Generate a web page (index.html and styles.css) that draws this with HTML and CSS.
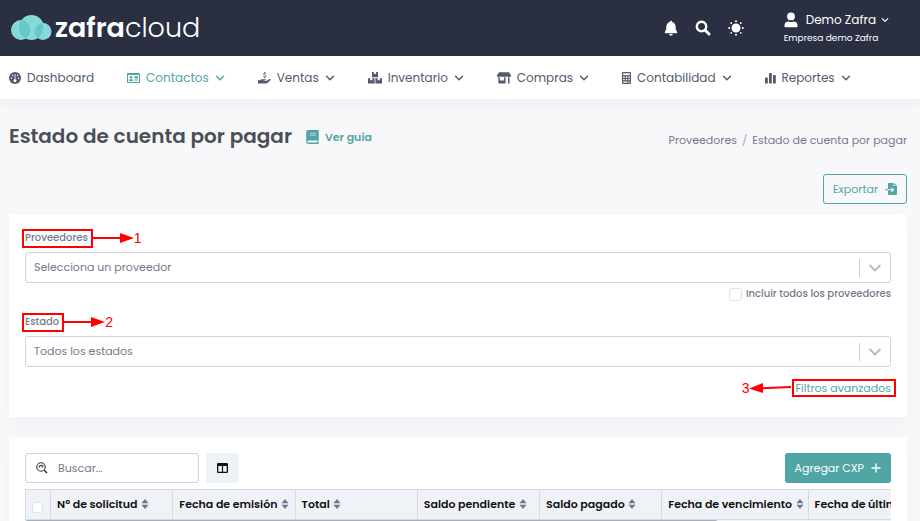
FILE: index.html
```html
<!DOCTYPE html>
<html lang="es">
<head>
  <meta charset="UTF-8" />
  <meta name="viewport" content="width=device-width, initial-scale=1" />
  <title>Estado de cuenta por pagar</title>
  <link rel="stylesheet" href="styles.css">
</head>

<body>
  <!-- Iconos reutilizados -->
  <svg class="sprite" width="0" height="0" aria-hidden="true">
    <symbol id="chevron" viewBox="0 0 10 10">
      <path d="M1.5 3.2 L5 6.8 L8.5 3.2" fill="none" stroke="currentColor" stroke-width="1.4" stroke-linecap="round" stroke-linejoin="round" />
    </symbol>
    <symbol id="sort" viewBox="0 0 8 10">
      <path d="M4 0 L7.6 4.2 H.4Z M4 10 L.4 5.8 H7.6Z" fill="currentColor" />
    </symbol>
  </svg>

  <header class="topbar">
    <a class="logo" href="#">
      <svg width="41" height="26" viewBox="0 0 41 26" aria-hidden="true">
        <circle cx="20.500" cy="12.500" r="12.500" fill="#86d9d8" />
        <circle cx="10" cy="15" r="10" fill="#86d9d8" />
        <circle cx="32" cy="16.500" r="8.500" fill="#86d9d8" />
        <path d="M10.500 5A10 10 0 0 1 14.500 23.400A12.500 12.500 0 0 1 10.500 5Z" fill="#65c9cb" />
        <path d="M31 8.200A12.500 12.500 0 0 1 27 23.300A8.500 8.500 0 0 1 31 8.200Z" fill="#65c9cb" />
      </svg>
      <span class="logo-text"><b>zafra</b>cloud</span>
    </a>

    <div class="topbar-actions">
      <button type="button" class="icon-btn" aria-label="Notificaciones">
        <svg width="14" height="16" viewBox="0 0 14 16"><path d="M7 .8c.7 0 1.100.5 1.100 1.100 2.200.5 3.500 2.300 3.500 4.600 0 3 .6 4.200 1.500 5.200.5.600.1 1.500-.7 1.500H1.600c-.8 0-1.200-.9-.7-1.500C1.800 10.700 2.400 9.500 2.400 6.500c0-2.300 1.300-4.100 3.500-4.600C5.900 1.300 6.300.8 7 .8ZM5.300 13.900h3.400c0 1-.8 1.600-1.700 1.600s-1.700-.6-1.700-1.600Z" fill="#fff" /></svg>
      </button>
      <button type="button" class="icon-btn" aria-label="Buscar">
        <svg width="16" height="16" viewBox="0 0 16 16" fill="none" stroke="#fff"><circle cx="6.500" cy="6.500" r="4.700" stroke-width="2.400" /><path d="M10 10 L14 14" stroke-width="2.900" stroke-linecap="round" /></svg>
      </button>
      <button type="button" class="icon-btn" aria-label="Tema">
        <svg width="16" height="16" viewBox="0 0 16 16"><circle cx="8" cy="8" r="4.500" fill="#fff" /><g fill="#fff"><circle cx="8" cy="1.200" r="1" /><circle cx="8" cy="14.800" r="1" /><circle cx="1.200" cy="8" r="1" /><circle cx="14.800" cy="8" r="1" /><circle cx="3.200" cy="3.200" r=".9" /><circle cx="12.800" cy="3.200" r=".9" /><circle cx="3.200" cy="12.800" r=".9" /><circle cx="12.800" cy="12.800" r=".9" /></g></svg>
      </button>
      <button type="button" class="user">
        <span class="user-name">
          <svg width="14" height="16" viewBox="0 0 14 16"><circle cx="7" cy="4.400" r="3.900" fill="#fff" /><path d="M.5 14.500v-1c0-2.600 1.700-4 4-4 .8.400 1.600.6 2.500.6s1.700-.2 2.500-.6c2.300 0 4 1.400 4 4v1c0 .5-.3.800-.8.800H1.300c-.5 0-.8-.3-.8-.8Z" fill="#fff" /></svg>
          Demo Zafra
          <svg class="caret" width="8" height="8"><use href="#chevron" /></svg>
        </span>
        <span class="user-company">Empresa demo Zafra</span>
      </button>
    </div>
  </header>

  <nav class="menu">
    <a href="#">
      <svg width="12" height="12" viewBox="0 0 12 12"><circle cx="6" cy="6" r="6" fill="currentColor" /><g fill="#fff"><circle cx="2.300" cy="6.200" r=".7" /><circle cx="3.500" cy="3.500" r=".7" /><circle cx="8.500" cy="3.500" r=".7" /><circle cx="9.700" cy="6.200" r=".7" /><path d="M5.600 2h.8v5.300a1.400 1.400 0 1 1-.8 0Z" /></g></svg>
      <span>Dashboard</span>
    </a>
    <a href="#" class="active">
      <svg width="13" height="12" viewBox="0 0 13 12"><path d="M1 1h11q1 0 1 1v8q0 1-1 1H1q-1 0-1-1V2q0-1 1-1Z" fill="currentColor" /><path d="M1 3h11v6.900H1Z" fill="#fff" /><g fill="currentColor"><circle cx="4" cy="5.200" r="1.300" /><path d="M1.900 9c0-1.400.8-2.100 2.100-2.100S6.100 7.600 6.100 9ZM7.500 4.200h3.600v2.400H7.500ZM7.500 7.500h3.600v1H7.500Z" /></g></svg>
      <span>Contactos</span>
      <svg class="caret" width="10" height="10"><use href="#chevron" /></svg>
    </a>
    <a href="#">
      <svg width="13" height="12" viewBox="0 0 13 12"><path d="M0 8.300h1.800c.9-.8 1.700-1 2.700-1h2.900c.9 0 .9 1.300 0 1.300H5.600v.4h2.900l2.900-1.900c1-.6 1.800.5 1 1.200L9.300 11q-.6.500-1.400.5H0Z" fill="currentColor" /><path d="M8 1.500C7.200.9 5.500 1 5.500 2.100S8 3.100 8 4.200 6.200 5.500 5.300 4.700M6.700 0v1.200M6.700 5v1.200" fill="none" stroke="currentColor" stroke-width=".9" /></svg>
      <span>Ventas</span>
      <svg class="caret" width="10" height="10"><use href="#chevron" /></svg>
    </a>
    <a href="#">
      <svg width="14" height="12" viewBox="0 0 14 12" fill="currentColor"><path d="M4 0h1.900v2.200l1.100-.5 1.100.5V0H10v5.300H4ZM0 6.200h2.200v2.300l1.100-.5 1.100.5V6.200h2.200v5.400H0ZM7.400 6.200h2.200v2.300l1.100-.5 1.100.5V6.200H14v5.400H7.400Z" /></svg>
      <span>Inventario</span>
      <svg class="caret" width="10" height="10"><use href="#chevron" /></svg>
    </a>
    <a href="#">
      <svg width="14" height="12" viewBox="0 0 14 12" fill="currentColor"><path d="M2 .3h10L14 3.600v1.200H0V3.600ZM1.300 5.300h1.500v3.300h4.300V5.300h1.500v6.300H2.300q-1 0-1-1ZM11 5.300h1.500v6.300H11Z" /></svg>
      <span>Compras</span>
      <svg class="caret" width="10" height="10"><use href="#chevron" /></svg>
    </a>
    <a href="#">
      <svg width="9" height="12" viewBox="0 0 9 12"><rect width="9" height="12" rx="1" fill="currentColor" /><path d="M1.200 1.200h6.600v2H1.200ZM1.200 4.500h1.500V6H1.200ZM3.800 4.500h1.500V6H3.800ZM6.400 4.500h1.400V6H6.400ZM1.200 7h1.500v1.300H1.200ZM3.800 7h1.500v1.300H3.800ZM6.400 7h1.400v1.300H6.400ZM1.200 9.400h4.100v1.300H1.200ZM6.400 9.400h1.400v1.300H6.400Z" fill="#fff" /></svg>
      <span>Contabilidad</span>
      <svg class="caret" width="10" height="10"><use href="#chevron" /></svg>
    </a>
    <a href="#">
      <svg width="11" height="12" viewBox="0 0 11 12" fill="currentColor"><rect y="5.500" width="2.800" height="6" rx=".6" /><rect x="4" y="1" width="2.800" height="10.500" rx=".6" /><rect x="8" y="3" width="2.800" height="8.500" rx=".6" /></svg>
      <span>Reportes</span>
      <svg class="caret" width="10" height="10"><use href="#chevron" /></svg>
    </a>
  </nav>

  <main>
    <div class="page-head">
      <h1>Estado de cuenta por pagar</h1>
      <a href="#" class="guide">
        <svg width="13" height="14" viewBox="0 0 13 14"><path d="M2.500 0H12q.8 0 .8.800V9.500q0 .5-.5.800v2.200q.5.200.5.700t-.6.800H2.500Q.2 14 .2 11.600V2.400Q.2 0 2.500 0Z" fill="#50a5a5" /><path d="M2.600 10.500h8.500v2H2.600a1 1 0 0 1 0-2Z" fill="#fff" /><path d="M4 3.300h6M4 5.300h6" stroke="#b9dcdc" stroke-width=".9" /></svg>
        Ver guía
      </a>
      <ol class="breadcrumb">
        <li><a href="#">Proveedores</a></li>
        <li>Estado de cuenta por pagar</li>
      </ol>
    </div>

    <div class="page-actions">
      <button type="button" class="btn btn-outline">
        Exportar
        <svg width="12" height="12" viewBox="0 0 12 12"><path d="M3.500 0H8.500v3H12v8q0 1-1 1H4.500Q3 12 3 11V1Q3 0 3.500 0ZM9.200 0 12 2.400H9.200Z" fill="#50a5a5" /><path d="M3 6.800h5M6.300 4.800l2.200 2-2.200 2" fill="none" stroke="#fff" stroke-width="1.100" /><path d="M0 6.800h3" stroke="#50a5a5" stroke-width="1.100" /></svg>
      </button>
    </div>

    <section class="card filters">
      <div class="field">
        <div class="label-row">
          <label for="proveedor" class="marked">Proveedores</label>
          <span class="callout">
            <svg width="42" height="10" viewBox="0 0 42 10"><path d="M0 5h30" stroke="#f00" stroke-width="2" /><path d="M28 0 42 5 28 10Z" fill="#f00" /></svg>1
          </span>
        </div>
        <div class="select">
          <select id="proveedor">
            <option>Selecciona un proveedor</option>
          </select>
          <svg width="14" height="14"><use href="#chevron" /></svg>
        </div>
        <div class="check">
          <input type="checkbox" id="todos" />
          <label for="todos">Incluir todos los proveedores</label>
        </div>
      </div>

      <div class="field">
        <div class="label-row">
          <label for="estado" class="marked">Estado</label>
          <span class="callout">
            <svg width="42" height="10" viewBox="0 0 42 10"><path d="M0 5h30" stroke="#f00" stroke-width="2" /><path d="M28 0 42 5 28 10Z" fill="#f00" /></svg>2
          </span>
        </div>
        <div class="select">
          <select id="estado">
            <option>Todos los estados</option>
          </select>
          <svg width="14" height="14"><use href="#chevron" /></svg>
        </div>
      </div>

      <div class="advanced">
        <span class="callout">
          3<svg width="42" height="10" viewBox="0 0 42 10"><path d="M12 5.300 42 4" stroke="#f00" stroke-width="2" /><path d="M14 0 0 5.500 14 10Z" fill="#f00" /></svg>
        </span>
        <a href="#" class="marked">Filtros avanzados</a>
      </div>
    </section>

    <section class="card listing">
      <div class="toolbar">
        <div class="search">
          <svg width="12" height="12" viewBox="0 0 12 12" fill="none" stroke="#333" stroke-width="1.100"><circle cx="5" cy="5" r="4.200" /><path d="M8.200 8.200 11 11" stroke-width="1.500" /><path d="M3 5.300c.3-1.500 1.500-2 2.400-2 .9 0 1.500.5 1.800 1M5.600 5.300l1.700-.8" /></svg>
          <input type="search" placeholder="Buscar..." aria-label="Buscar" />
        </div>
        <button type="button" class="btn btn-light" aria-label="Columnas">
          <svg width="11" height="10" viewBox="0 0 11 10"><path d="M1.300 0h8.400Q11 0 11 1.300v7.400Q11 10 9.700 10H1.300Q0 10 0 8.700V1.300Q0 0 1.300 0ZM1.300 3v5.700h3.600V3ZM6.100 3v5.700h3.600V3Z" fill="#111" fill-rule="evenodd" /></svg>
        </button>
        <button type="button" class="btn btn-primary">
          Agregar CXP
          <svg width="10" height="10" viewBox="0 0 10 10"><path d="M5 .5v9M.5 5h9" stroke="#fff" stroke-width="1.400" /></svg>
        </button>
      </div>

      <div class="table-wrap">
        <table>
          <colgroup>
            <col class="col-check"><col class="col"><col class="col"><col class="col"><col class="col"><col class="col"><col class="col-wide"><col class="col-wide">
          </colgroup>
          <thead>
            <tr>
              <th><input type="checkbox" aria-label="Seleccionar todo" /></th>
              <th>Nº de solicitud <svg width="8" height="10"><use href="#sort" /></svg></th>
              <th>Fecha de emisión <svg width="8" height="10"><use href="#sort" /></svg></th>
              <th>Total <svg width="8" height="10"><use href="#sort" /></svg></th>
              <th>Saldo pendiente <svg width="8" height="10"><use href="#sort" /></svg></th>
              <th>Saldo pagado <svg width="8" height="10"><use href="#sort" /></svg></th>
              <th>Fecha de vencimiento <svg width="8" height="10"><use href="#sort" /></svg></th>
              <th>Fecha de último pago <svg width="8" height="10"><use href="#sort" /></svg></th>
            </tr>
          </thead>
        </table>
      </div>
      <div class="scroll-track"><div class="scroll-thumb"></div></div>
    </section>
  </main>
</body>
</html>
```
FILE: styles.css
```css
/* Base */
* {
  box-sizing: border-box;
}

body {
  margin: 0;
  font-family: Poppins, Inter, sans-serif;
  font-size: 11px;
  line-height: 16px;
  color: #74788d;
  background: #f8f8fb;
}

a {
  color: inherit;
  text-decoration: none;
}

button,
input,
select {
  font: inherit;
  color: inherit;
}

button {
  cursor: pointer;
}

svg {
  flex-shrink: 0;
}

.sprite {
  position: absolute;
}

/* Barra superior */
.topbar {
  display: flex;
  justify-content: space-between;
  align-items: center;
  height: 56px;
  padding: 0 31px 0 11px;
  background: #2a3042;
  color: #fff;
}

.logo {
  display: flex;
  align-items: center;
  gap: 3px;
}

.logo-text {
  font-size: 27px;
  line-height: 32px;
  font-weight: 300;
}

.logo-text b {
  font-weight: 600;
}

.topbar-actions {
  display: flex;
  align-items: center;
  gap: 17px;
}

.icon-btn,
.user {
  padding: 0;
  border: 0;
  background: none;
}

.icon-btn {
  display: flex;
}

.user {
  display: flex;
  flex-direction: column;
  margin-left: 23px;
  text-align: left;
}

.user-name {
  display: flex;
  align-items: center;
  gap: 8px;
  font-size: 12px;
  line-height: 20px;
}

.user-name .caret {
  margin-left: -3px;
}

.user-company {
  font-size: 9px;
}

/* Menú */
.menu {
  display: flex;
  gap: 33px;
  height: 43px;
  padding: 0 9px;
  background: #fff;
  box-shadow: 0 4px 14px rgba(18, 38, 63, 0.05);
  font-size: 12px;
  color: #545a6d;
}

.menu a {
  display: flex;
  align-items: center;
  gap: 6px;
}

.menu .active {
  color: #50a5a5;
}

/* Contenido */
main {
  padding: 24px 13px 24px 9px;
}

.page-head {
  display: flex;
  align-items: center;
  height: 27px;
}

h1 {
  margin: 0;
  font-size: 20px;
  line-height: 27px;
  font-weight: 600;
  color: #495057;
}

.guide {
  display: flex;
  align-items: center;
  gap: 6px;
  margin-left: 14px;
  font-weight: 600;
  color: #50a5a5;
}

.breadcrumb {
  display: flex;
  margin: 6px 0 0 auto;
  padding: 0;
  list-style: none;
}

.breadcrumb li + li::before {
  content: "/";
  margin: 0 5px;
  color: #a5a8b8;
}

.page-actions {
  display: flex;
  justify-content: flex-end;
  margin: 24px 0 10px;
}

.btn {
  display: flex;
  align-items: center;
  gap: 7px;
  height: 30px;
  padding: 0 9px;
  border: 1px solid transparent;
  border-radius: 3px;
}

.btn-outline {
  border-color: #50a5a5;
  background: transparent;
  color: #50a5a5;
}

.btn-primary {
  margin-left: auto;
  background: #50a5a5;
  color: #fff;
}

.btn-light {
  background: #eff2f7;
}

/* Tarjetas */
.card {
  padding: 16px 16px 0;
  border-radius: 3px;
  background: #fff;
  box-shadow: 0 8px 18px rgba(18, 38, 63, 0.03);
}

.card + .card {
  margin-top: 20px;
}

/* Filtros */
.filters {
  padding-bottom: 21px;
}

.field {
  margin-bottom: 9px;
}

.label-row {
  display: flex;
  height: 22px;
  font-size: 10px;
  font-weight: 500;
}

.marked {
  position: relative;
}

/* Recuadro rojo que resalta un control */
.marked::after {
  content: "";
  position: absolute;
  inset: -1px -5px -1px -3px;
  border: 2px solid #f00;
  pointer-events: none;
}

.label-row label {
  height: 17px;
}

.callout {
  display: flex;
  align-items: center;
  height: 16px;
  font-family: "Liberation Sans", sans-serif;
  font-size: 14px;
  font-weight: 400;
  color: #f00;
}

.label-row .callout {
  margin-left: 4px;
}

.select {
  display: flex;
  align-items: center;
  height: 31px;
  border: 1px solid #ced4da;
  border-radius: 3px;
}

.select select {
  flex: 1;
  height: 100%;
  padding: 0 8px 2px;
  border: 0;
  background: none;
  appearance: none;
}

.select svg {
  width: 31px;
  height: 18px;
  padding: 2px 8px;
  border-left: 1px solid #ccc;
  color: #bbb;
}

.check {
  display: flex;
  justify-content: flex-end;
  align-items: center;
  gap: 4px;
  height: 22px;
  font-size: 10px;
  font-weight: 500;
}

input[type="checkbox"] {
  width: 13px;
  height: 13px;
  margin: 0;
  border: 1px solid #dfe1e6;
  border-radius: 3px;
  background: #fff;
  appearance: none;
}

.advanced {
  display: flex;
  justify-content: flex-end;
  gap: 4px;
  padding-top: 4px;
  color: #50a5a5;
}

/* Listado */
.toolbar {
  display: flex;
  gap: 7px;
  margin-bottom: 6px;
}

.btn-light {
  padding: 0 10px;
}

.search {
  display: flex;
  align-items: center;
  gap: 10px;
  width: 174px;
  height: 30px;
  padding: 0 10px;
  border: 1px solid #ced4da;
  border-radius: 3px;
}

.search input {
  flex: 1;
  min-width: 0;
  padding: 0;
  border: 0;
  outline: 0;
  background: none;
}

.search input::placeholder {
  color: #74788d;
}

.table-wrap {
  overflow: hidden;
}

table {
  width: 930px;
  table-layout: fixed;
  border-collapse: collapse;
}

.col-check {
  width: 25px;
}

.col {
  width: 122px;
}

.col-wide {
  width: 146px;
}

th {
  height: 30px;
  padding: 0 6px 1px;
  border: 1px solid #d6dae1;
  background: #eff2f7;
  color: #111;
  font-weight: 600;
  text-align: left;
  white-space: nowrap;
}

th svg {
  margin-left: 1px;
  vertical-align: -1px;
  color: #74788d;
}

th input[type="checkbox"] {
  width: 11px;
  height: 11px;
  vertical-align: -5px;
}

.scroll-track {
  height: 6px;
  background: #eff2f7;
}

.scroll-thumb {
  width: 80%;
  height: 100%;
  border-radius: 3px;
  background: #a9afb9;
}
```
